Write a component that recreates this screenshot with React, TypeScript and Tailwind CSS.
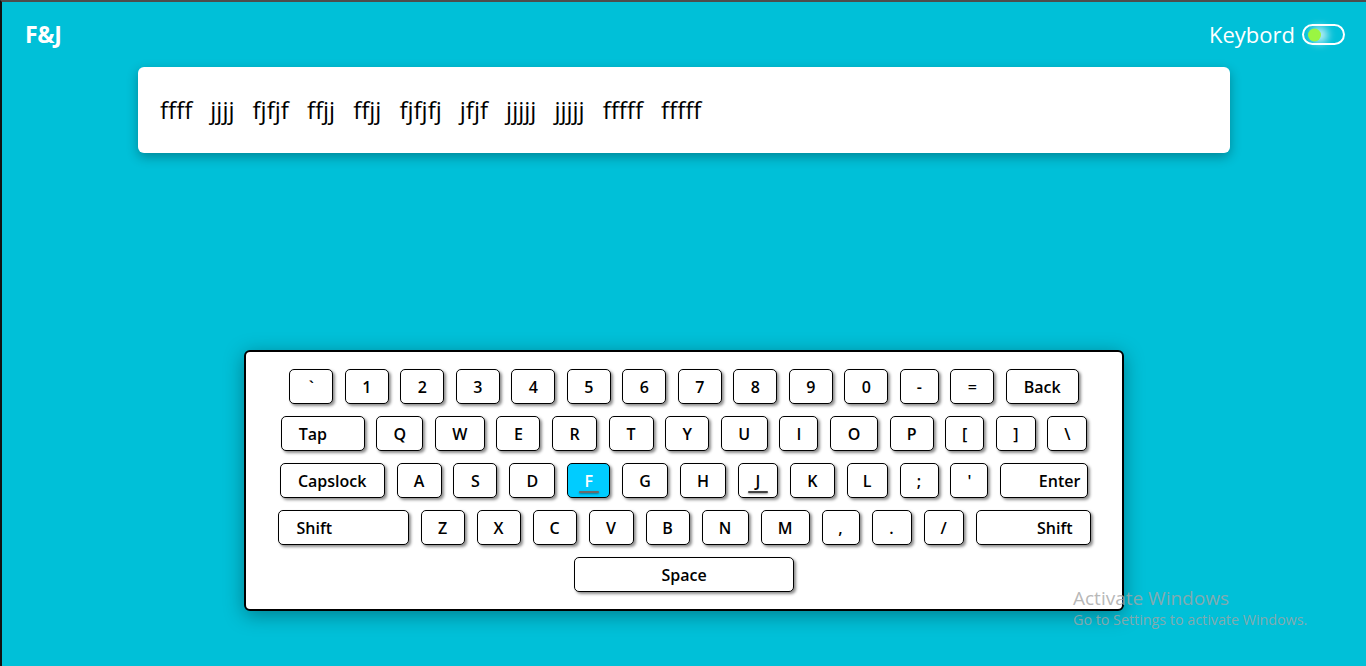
type KeyDef = { label: string; w: number; align?: 'left' | 'right' | 'center'; pad?: number; active?: boolean; bump?: boolean }

const rows: KeyDef[][] = [
  [
    { label: '`', w: 44 },
    { label: '1', w: 44 },
    { label: '2', w: 44 },
    { label: '3', w: 44 },
    { label: '4', w: 44 },
    { label: '5', w: 44 },
    { label: '6', w: 44 },
    { label: '7', w: 44 },
    { label: '8', w: 44 },
    { label: '9', w: 44 },
    { label: '0', w: 44 },
    { label: '-', w: 39 },
    { label: '=', w: 44 },
    { label: 'Back', w: 73 },
  ],
  [
    { label: 'Tap', w: 84, align: 'left', pad: 17 },
    { label: 'Q', w: 47 },
    { label: 'W', w: 50 },
    { label: 'E', w: 44 },
    { label: 'R', w: 45 },
    { label: 'T', w: 45 },
    { label: 'Y', w: 44 },
    { label: 'U', w: 47 },
    { label: 'I', w: 39 },
    { label: 'O', w: 48 },
    { label: 'P', w: 44 },
    { label: '[', w: 39 },
    { label: ']', w: 40 },
    { label: '\\', w: 40 },
  ],
  [
    { label: 'Capslock', w: 105 },
    { label: 'A', w: 45 },
    { label: 'S', w: 44 },
    { label: 'D', w: 46 },
    { label: 'F', w: 43, active: true, bump: true },
    { label: 'G', w: 46 },
    { label: 'H', w: 46 },
    { label: 'J', w: 40, bump: true },
    { label: 'K', w: 45 },
    { label: 'L', w: 41 },
    { label: ';', w: 39 },
    { label: "'", w: 38 },
    { label: 'Enter', w: 88, align: 'right', pad: 7 },
  ],
  [
    { label: 'Shift', w: 131, align: 'left', pad: 18 },
    { label: 'Z', w: 44 },
    { label: 'X', w: 44 },
    { label: 'C', w: 44 },
    { label: 'V', w: 45 },
    { label: 'B', w: 44 },
    { label: 'N', w: 47 },
    { label: 'M', w: 49 },
    { label: ',', w: 38 },
    { label: '.', w: 40 },
    { label: '/', w: 40 },
    { label: 'Shift', w: 115, align: 'right', pad: 17 },
  ],
  [{ label: 'Space', w: 220 }],
]

// gaps differ slightly per row in the original
const rowGap = ['gap-[11.5px]', 'gap-[11.6px]', 'gap-[11.9px]', 'gap-[12px]', 'gap-[12px]']

const words = ['ffff', 'jjjj', 'fjfjf', 'ffjj', 'ffjj', 'fjfjfj', 'jfjf', 'jjjjj', 'jjjjj', 'fffff', 'fffff']

function Key({ k }: { k: KeyDef }) {
  const justify = k.align === 'left' ? 'justify-start' : k.align === 'right' ? 'justify-end' : 'justify-center'
  return (
    <div
      className={`relative flex items-center h-[35px] rounded-[5px] border border-black text-[16px] font-semibold shadow-[2px_2px_3px_rgba(0,0,0,0.45)] ${justify} ${
        k.active ? 'bg-[#00ccff] text-white' : 'bg-white text-black'
      }`}
      style={{ width: k.w, paddingLeft: k.align === 'left' ? k.pad : 0, paddingRight: k.align === 'right' ? k.pad : 0 }}
    >
      {k.label}
      {k.bump && (
        <span
          className={`absolute bottom-[4px] left-1/2 -translate-x-1/2 w-[20px] h-[2px] rounded-full shadow-[0_1px_2px_rgba(0,0,0,0.4)] ${
            k.active ? 'bg-[#6b6b6b]' : 'bg-[#444]'
          }`}
        />
      )}
    </div>
  )
}

export default function App() {
  return (
    <div className="relative min-h-[666px] bg-[#00c0d8] border-t-2 border-l-2 border-t-[#4d4d4d] border-l-[#111] font-['Open_Sans',sans-serif] overflow-hidden">
      <header className="flex items-center justify-between h-[65px] pl-[23px] pr-[21px]">
        <div className="text-white font-bold text-[23px] tracking-[-0.3px]">F&amp;J</div>
        <div className="flex items-center gap-[7px]">
          <span className="text-white text-[22px]">Keybord</span>
          <div className="relative w-[43px] h-[21px] rounded-full border-2 border-white">
            <span className="absolute left-[4px] top-1/2 -translate-y-1/2 w-[13px] h-[13px] rounded-full bg-[#9af542] shadow-[5px_0_8px_2px_rgba(255,255,255,0.75)]" />
          </div>
        </div>
      </header>

      <div className="mx-auto w-[1092px] h-[86px] bg-white rounded-[6px] shadow-[0_4px_12px_rgba(0,0,0,0.3)] flex items-center pl-[22px]">
        <div className="flex gap-[18px] text-[24px] text-black">
          {words.map((w, i) => (
            <span key={i}>{w}</span>
          ))}
        </div>
      </div>

      <div className="mx-auto mt-[197px] w-[880px] bg-white border-2 border-black rounded-[6px] pt-[17px] pb-[17px] shadow-[0_4px_20px_rgba(0,0,0,0.35)] flex flex-col items-center gap-[12px]">
        {rows.map((row, i) => (
          <div key={i} className={`flex ${rowGap[i]}`}>
            {row.map((k, j) => (
              <Key key={j} k={k} />
            ))}
          </div>
        ))}
      </div>

      <div className="absolute left-[1071px] top-[584px] pointer-events-none text-[rgba(165,165,165,0.8)]">
        <div className="text-[19px] leading-[24px]">Activate Windows</div>
        <div className="text-[14.3px] leading-[20px]">Go to Settings to activate Windows.</div>
      </div>
    </div>
  )
}
